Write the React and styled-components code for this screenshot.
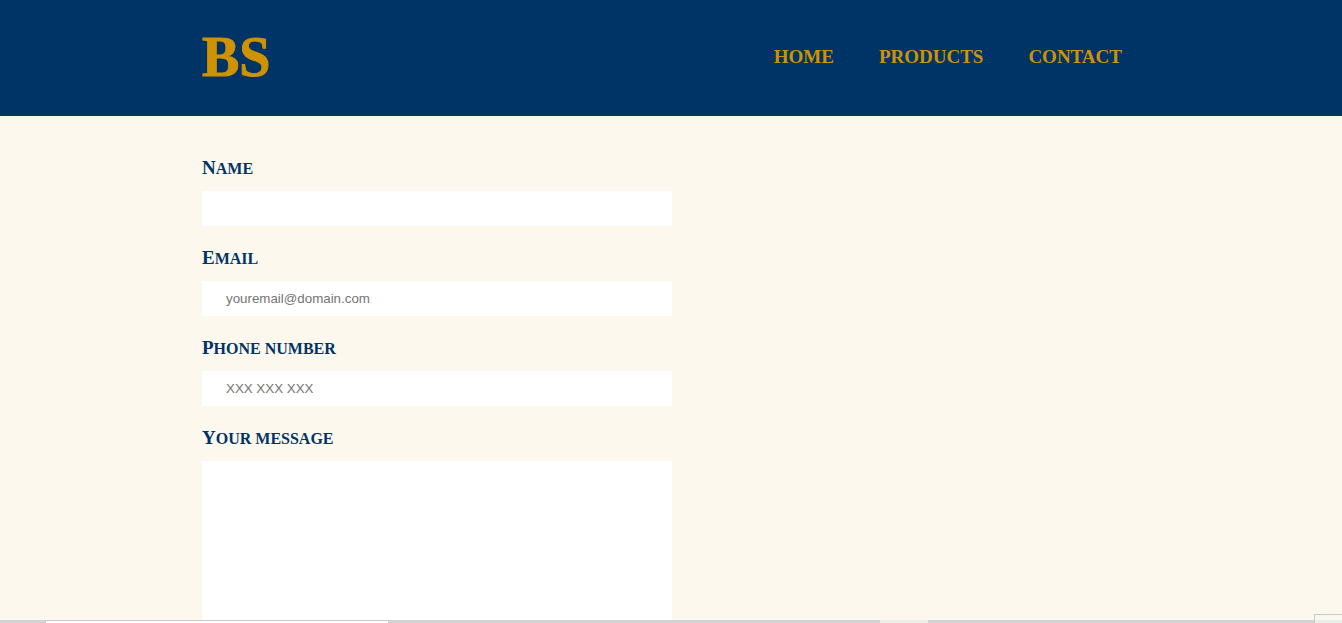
import React from "react";
import styled, { createGlobalStyle } from "styled-components";

const navy = "#003466";
const gold = "#cf9200";
const cream = "#fdf8ed";

const GlobalStyle = createGlobalStyle`
  *, *::before, *::after { box-sizing: border-box; }
  body {
    margin: 0;
    background: ${cream};
    color: ${navy};
    font-family: "Liberation Serif", "Times New Roman", serif;
  }
`;

const Page = styled.div`
  height: 100vh;
  display: flex;
  flex-direction: column;
  overflow: hidden;
`;

const Container = styled.div`
  width: 70%;
  max-width: 938px;
  margin: 0 auto;
`;

const Header = styled.header`
  flex: none;
  background: ${navy};
`;

const HeaderRow = styled(Container)`
  min-height: 116px;
  display: flex;
  align-items: center;
  justify-content: space-between;
  padding: 0 18px 3px 0;
`;

const Logo = styled.a`
  color: ${gold};
  font-size: 56px;
  line-height: 64px;
  font-weight: 700;
  text-decoration: none;
  -webkit-text-stroke: 1px ${gold};
`;

const Nav = styled.nav`
  display: flex;
  gap: 45px;
`;

const NavLink = styled.a`
  color: ${gold};
  font-size: 19px;
  line-height: 24px;
  font-weight: 700;
  text-decoration: none;
  text-transform: uppercase;
`;

const Main = styled.main`
  flex: 1;
  min-height: 0;
  overflow: hidden;
`;

const Form = styled.form`
  max-width: 470px;
  padding-top: 40px;
  display: flex;
  flex-direction: column;
  gap: 20px;
`;

const Field = styled.div`
  display: flex;
  flex-direction: column;
  gap: 10px;
`;

const Label = styled.label`
  font-size: 16px;
  line-height: 24px;
  font-weight: 700;
  text-transform: uppercase;
  &::first-letter { font-size: 19px; }
`;

const Input = styled.input`
  width: 100%;
  height: 35px;
  padding: 0 24px;
  border: 0;
  border-radius: 0;
  outline: 0;
  background: #fff;
  font-family: "Liberation Sans", Arial, sans-serif;
  &::placeholder { color: #757575; }
`;

const TextArea = styled(Input).attrs({ as: "textarea" })`
  height: 200px;
  padding: 12px 24px;
  resize: none;
`;

const BottomBar = styled.footer`
  flex: none;
  position: relative;
  height: 3px;
  display: flex;
  background: #d3d3d3;
`;

const SearchSlot = styled.div`
  width: 344px;
  margin-left: 45px;
  border: 1px solid #c8c8c8;
  border-bottom: 0;
  background: #fff;
`;

const ActiveSlot = styled.div`
  width: 48px;
  margin-left: 491px;
  background: #ebf1e8;
`;

const CornerPanel = styled.div`
  position: absolute;
  right: 0;
  bottom: 0;
  width: 28px;
  height: 9px;
  border: 1px solid #c5cccd;
  border-width: 1px 0 0 1px;
  background: linear-gradient(#f8f8f0 60%, #e8efe9 60%);
`;

const fields = [
  { id: "name", label: "Name", type: "text" },
  { id: "email", label: "Email", type: "email", placeholder: "youremail@domain.com" },
  { id: "phone", label: "Phone number", type: "tel", placeholder: "XXX XXX XXX" },
];

export default function App() {
  return (
    <Page>
      <GlobalStyle />
      <Header>
        <HeaderRow>
          <Logo href="#home">BS</Logo>
          <Nav>
            <NavLink href="#home">Home</NavLink>
            <NavLink href="#products">Products</NavLink>
            <NavLink href="#contact">Contact</NavLink>
          </Nav>
        </HeaderRow>
      </Header>
      <Main>
        <Container>
          <Form>
            {fields.map(({ id, label, ...rest }) => (
              <Field key={id}>
                <Label htmlFor={id}>{label}</Label>
                <Input id={id} name={id} {...rest} />
              </Field>
            ))}
            <Field>
              <Label htmlFor="message">Your message</Label>
              <TextArea id="message" name="message" />
            </Field>
          </Form>
        </Container>
      </Main>
      <BottomBar>
        <SearchSlot />
        <ActiveSlot />
        <CornerPanel />
      </BottomBar>
    </Page>
  );
}
